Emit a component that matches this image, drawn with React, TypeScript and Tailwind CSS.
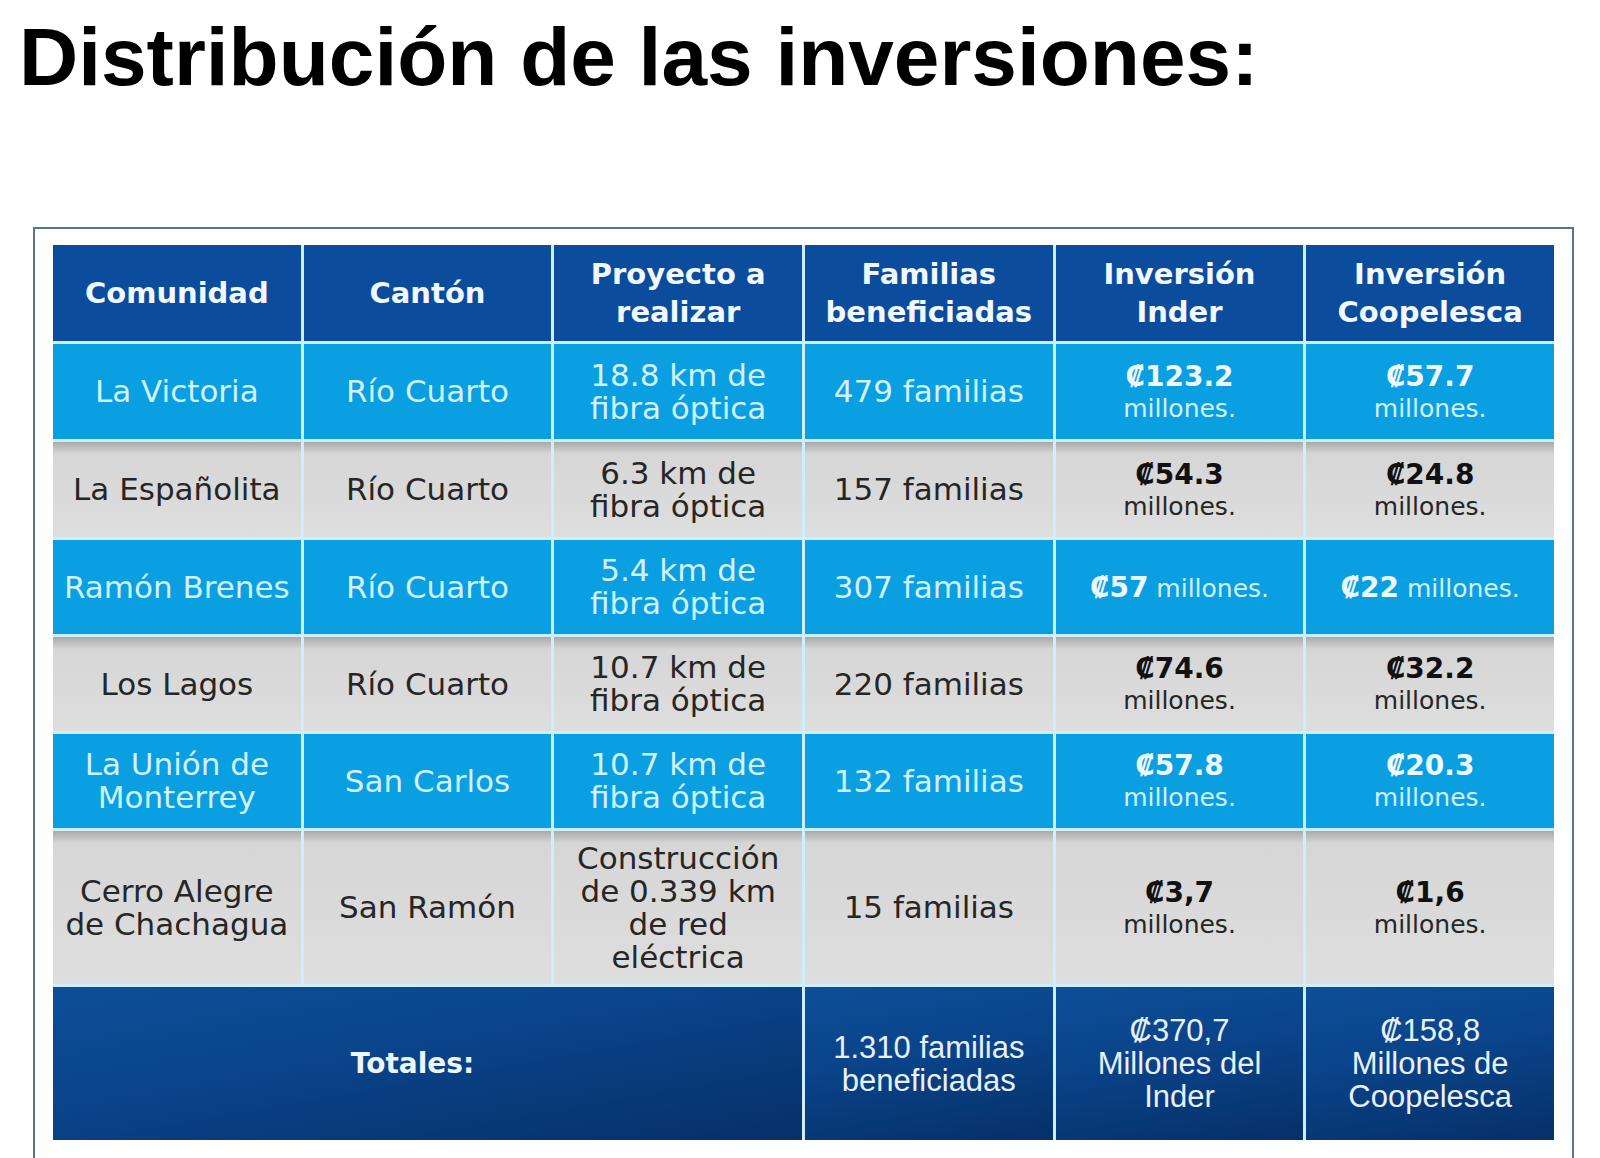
const body = '[font-family:"DejaVu_Sans","Liberation_Sans",sans-serif]';

type Money = { value: string; inline?: boolean };

type Row = {
  tone: "blue" | "gray";
  comunidad: string[];
  canton: string;
  proyecto: string[];
  familias: string;
  inder: Money;
  coope: Money;
  h: string;
};

const rows: Row[] = [
  {
    tone: "blue",
    comunidad: ["La Victoria"],
    canton: "Río Cuarto",
    proyecto: ["18.8 km de", "fibra óptica"],
    familias: "479 familias",
    inder: { value: "₡123.2" },
    coope: { value: "₡57.7" },
    h: "h-[95px]",
  },
  {
    tone: "gray",
    comunidad: ["La Españolita"],
    canton: "Río Cuarto",
    proyecto: ["6.3 km de", "fibra óptica"],
    familias: "157 familias",
    inder: { value: "₡54.3" },
    coope: { value: "₡24.8" },
    h: "h-[95px]",
  },
  {
    tone: "blue",
    comunidad: ["Ramón Brenes"],
    canton: "Río Cuarto",
    proyecto: ["5.4 km de", "fibra óptica"],
    familias: "307 familias",
    inder: { value: "₡57", inline: true },
    coope: { value: "₡22", inline: true },
    h: "h-[94px]",
  },
  {
    tone: "gray",
    comunidad: ["Los Lagos"],
    canton: "Río Cuarto",
    proyecto: ["10.7 km de", "fibra óptica"],
    familias: "220 familias",
    inder: { value: "₡74.6" },
    coope: { value: "₡32.2" },
    h: "h-[94px]",
  },
  {
    tone: "blue",
    comunidad: ["La Unión de", "Monterrey"],
    canton: "San Carlos",
    proyecto: ["10.7 km de", "fibra óptica"],
    familias: "132 familias",
    inder: { value: "₡57.8" },
    coope: { value: "₡20.3" },
    h: "h-[94px]",
  },
  {
    tone: "gray",
    comunidad: ["Cerro Alegre", "de Chachagua"],
    canton: "San Ramón",
    proyecto: ["Construcción", "de 0.339 km", "de red", "eléctrica"],
    familias: "15 familias",
    inder: { value: "₡3,7" },
    coope: { value: "₡1,6" },
    h: "h-[153px]",
  },
];

function Cell({ tone, h, children }: { tone: "blue" | "gray"; h: string; children: React.ReactNode }) {
  const bg =
    tone === "blue"
      ? "bg-[#0a9fe1] text-[#d2f1ff]"
      : "bg-[linear-gradient(to_bottom,#a9a9a9,#d6d6d6_12px,#dedede)] text-[#262626]";
  return (
    <div className={`${bg} ${h} flex flex-col items-center justify-center text-center text-[31px] leading-[33px]`}>
      {children}
    </div>
  );
}

function MoneyCell({ tone, h, money }: { tone: "blue" | "gray"; h: string; money: Money }) {
  const strong = tone === "blue" ? "text-[#eef9ff]" : "text-[#111]";
  if (money.inline) {
    return (
      <Cell tone={tone} h={h}>
        <div className="whitespace-nowrap">
          <span className={`font-bold text-[28px] ${strong}`}>{money.value}</span>
          <span className="text-[25px]"> millones.</span>
        </div>
      </Cell>
    );
  }
  return (
    <Cell tone={tone} h={h}>
      <div className={`font-bold text-[28px] leading-[34px] ${strong}`}>{money.value}</div>
      <div className="text-[25px] leading-[30px]">millones.</div>
    </Cell>
  );
}

const headers = [
  ["Comunidad"],
  ["Cantón"],
  ["Proyecto a", "realizar"],
  ["Familias", "beneficiadas"],
  ["Inversión", "Inder"],
  ["Inversión", "Coopelesca"],
];

const totalBg = "bg-[linear-gradient(170deg,#0d4f99,#0a4389_45%,#063068)]";

export default function App() {
  return (
    <div className="w-[1600px] h-[1158px] overflow-hidden bg-white">
      <h1 className='pl-[19px] pt-[16px] text-[82px] leading-[81px] font-bold text-black [font-family:"Liberation_Sans",Arial,sans-serif]'>
        Distribución de las inversiones:
      </h1>

      <div className="ml-[33px] mt-[130px] w-[1541px] border-2 border-[#56758f] px-[18px] pt-[16px] pb-[40px]">
        <div className={`grid grid-cols-6 gap-[3px] bg-[#cdeefc] ${body}`}>
          {headers.map((lines, i) => (
            <div
              key={i}
              className="h-[96px] bg-[#0b4c9d] flex flex-col items-center justify-center text-center text-[29px] leading-[38px] font-bold text-[#f2f8ff]"
            >
              {lines.map((l) => (
                <div key={l}>{l}</div>
              ))}
            </div>
          ))}

          {rows.map((r, i) => (
            <div key={i} className="contents">
              <Cell tone={r.tone} h={r.h}>
                {r.comunidad.map((l) => (
                  <div key={l} className="whitespace-nowrap">{l}</div>
                ))}
              </Cell>
              <Cell tone={r.tone} h={r.h}>
                <div>{r.canton}</div>
              </Cell>
              <Cell tone={r.tone} h={r.h}>
                {r.proyecto.map((l) => (
                  <div key={l} className="whitespace-nowrap">{l}</div>
                ))}
              </Cell>
              <Cell tone={r.tone} h={r.h}>
                <div>{r.familias}</div>
              </Cell>
              <MoneyCell tone={r.tone} h={r.h} money={r.inder} />
              <MoneyCell tone={r.tone} h={r.h} money={r.coope} />
            </div>
          ))}

          <div className={`col-span-3 h-[153px] ${totalBg} flex items-center justify-center pr-[30px] text-[28px] font-bold text-[#eef5fc]`}>
            Totales:
          </div>
          {[
            ["1.310 familias", "beneficiadas"],
            ["₡370,7", "Millones del", "Inder"],
            ["₡158,8", "Millones de", "Coopelesca"],
          ].map((lines, i) => (
            <div
              key={i}
              className={`h-[153px] ${totalBg} flex flex-col items-center justify-center text-center text-[31px] leading-[33px] text-[#e8f0fa] [font-family:"Liberation_Sans",Arial,sans-serif]`}
            >
              {lines.map((l) => (
                <div key={l}>{l}</div>
              ))}
            </div>
          ))}
        </div>
      </div>
    </div>
  );
}
